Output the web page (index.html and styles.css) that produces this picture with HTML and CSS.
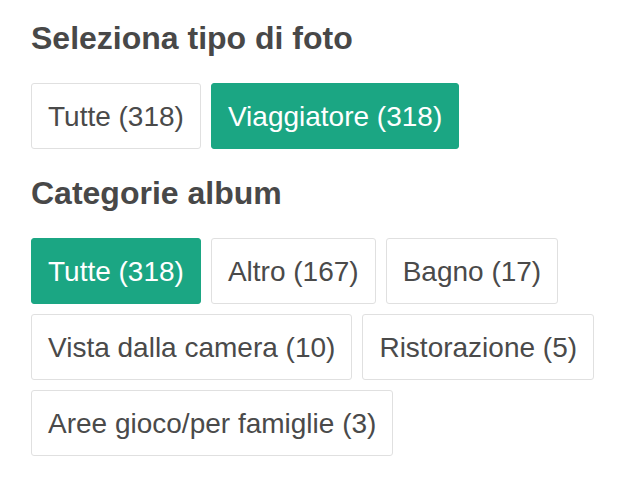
FILE: index.html
```html
<!DOCTYPE html>
<html lang="it">
<head>
<meta charset="utf-8">
<link rel="stylesheet" href="styles.css">
</head>
<body>
<div class="panel">
  <section class="group">
    <h2 class="title">Seleziona tipo di foto</h2>
    <div class="chips">
      <button class="chip">Tutte (318)</button>
      <button class="chip active">Viaggiatore (318)</button>
    </div>
  </section>
  <section class="group">
    <h2 class="title">Categorie album</h2>
    <div class="chips">
      <button class="chip active">Tutte (318)</button>
      <button class="chip">Altro (167)</button>
      <button class="chip">Bagno (17)</button>
      <button class="chip">Vista dalla camera (10)</button>
      <button class="chip">Ristorazione (5)</button>
      <button class="chip">Aree gioco/per famiglie (3)</button>
    </div>
  </section>
</div>
</body>
</html>
```
FILE: styles.css
```css
html, body {
  margin: 0;
  padding: 0;
  background: #ffffff;
}
body {
  font-family: "Liberation Sans", Arial, Helvetica, sans-serif;
  color: #4a4a4a;
}
.panel {
  padding: 20px 20px 0 31px;
  display: flex;
  flex-direction: column;
  gap: 26px;
}
.title {
  margin: 0 0 27px 0;
  font-size: 32px;
  line-height: 36px;
  font-weight: bold;
  color: #484848;
}
.chips {
  display: flex;
  flex-wrap: wrap;
  gap: 10px 10px;
  max-width: 580px;
}
.chip {
  font-family: inherit;
  font-size: 28px;
  line-height: 40px;
  padding: 13px 16px 11px 16px;
  border: 1px solid #e0e0e0;
  border-radius: 3px;
  background: #ffffff;
  color: #4a4a4a;
  margin: 0;
  cursor: pointer;
}
.chip.active {
  background: #1ba683;
  border-color: #1ba683;
  color: #ffffff;
}
```
